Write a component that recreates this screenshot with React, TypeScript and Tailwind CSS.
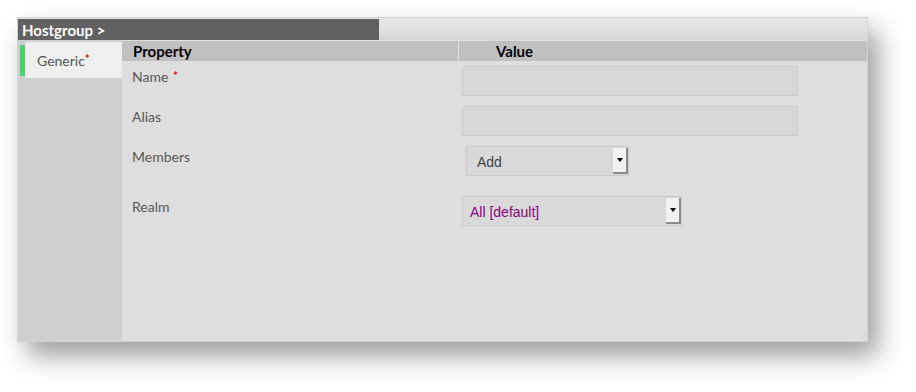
import React from 'react';

const font = { fontFamily: 'Lato, "Open Sans", sans-serif' };

function Req() {
  return (
    <span className="relative -top-[2px] ml-[5px] text-[11px] font-bold text-[#e00000]">*</span>
  );
}

function SelectBox({ value, width, className = '', textClass = '' }: { value: string; width: string; className?: string; textClass?: string }) {
  return (
    <div
      className={`flex h-[30px] items-stretch border border-[#cacaca] bg-[#d9d9d9] ${width} ${className}`}
    >
      <div
        className={`flex flex-1 items-center pt-[2px] text-[14px] ${textClass}`}
        style={{ fontFamily: '"Liberation Sans", Arial, sans-serif' }}
      >
        {value}
      </div>
      <div className="my-[1px] flex w-[15px] items-center justify-center border-b-2 border-r-2 border-b-[#8a8a8a] border-r-[#8a8a8a] bg-[#f2f2f2]">
        <div className="h-0 w-0 border-l-[3px] border-r-[3px] border-t-[4px] border-l-transparent border-r-transparent border-t-black" />
      </div>
    </div>
  );
}

export default function App() {
  return (
    <div className="min-h-screen bg-white pl-[17px] pt-[17px]" style={font}>
      <div className="flex h-[325px] w-[851px] flex-col border border-[#d2d2d2] bg-[#e4e4e4] shadow-[10px_14px_24px_rgba(0,0,0,0.38)]">
        {/* title band */}
        <div className="flex h-[22px] items-end bg-linear-to-b from-[#e6e6e6] via-[#e3e3e3] to-[#d6d6d6]">
          <div className="h-[21px] w-[361px] bg-[#616161] pl-[4px] text-[15px] font-bold leading-[22px] text-white">
            Hostgroup &gt;
          </div>
        </div>

        <div className="flex flex-1">
          {/* sidebar */}
          <div className="w-[104px] bg-[#cfcfcf] pl-[2px] pt-[2px]">
            <div className="flex h-[36px] items-center">
              <div className="h-[31px] w-[5px] bg-[#4cd26b]" />
              <div className="flex h-[36px] flex-1 items-center rounded-l-[3px] bg-[#efefef] pl-[12px] text-[14px] text-[#555]">
                Generic
                <span className="relative -top-[1px] text-[11px] font-bold text-[#e00000]">*</span>
              </div>
            </div>
          </div>

          {/* main */}
          <div className="flex flex-1 flex-col bg-[#dedede] pt-[1px]">
            <div className="flex h-[20px] bg-[#c0c0c0] text-[15px] font-bold leading-[21px] text-black">
              <div className="w-[336px] pl-[11px]">Property</div>
              <div className="w-px bg-[#e2e2e2]" />
              <div className="pl-[37px]">Value</div>
            </div>

            <div className="flex h-[40px] text-[14px] text-[#575757]">
              <div className="w-[337px] pl-[10px] pt-[6px] leading-[20px]">
                Name
                <Req />
              </div>
              <div className="pl-[3px] pt-[5px]">
                <div className="h-[30px] w-[336px] border border-[#cbcbcb] bg-[#d8d8d8]" />
              </div>
            </div>

            <div className="flex h-[40px] text-[14px] text-[#575757]">
              <div className="w-[337px] pl-[10px] pt-[6px] leading-[20px]">Alias</div>
              <div className="pl-[3px] pt-[5px]">
                <div className="h-[30px] w-[336px] border border-[#cbcbcb] bg-[#d8d8d8]" />
              </div>
            </div>

            <div className="flex h-[50px] text-[14px] text-[#575757]">
              <div className="w-[337px] pl-[10px] pt-[6px] leading-[20px]">Members</div>
              <div className="pl-[7px] pt-[5px]">
                <SelectBox value="Add" width="w-[163px]" textClass="pl-[10px] text-[#444]" />
              </div>
            </div>

            <div className="flex h-[50px] text-[14px] text-[#575757]">
              <div className="w-[337px] pl-[10px] pt-[6px] leading-[20px]">Realm</div>
              <div className="pl-[3px] pt-[5px]">
                <SelectBox value="All [default]" width="w-[220px]" textClass="pl-[7px] text-[#860086]" />
              </div>
            </div>
          </div>
        </div>
      </div>
    </div>
  );
}
